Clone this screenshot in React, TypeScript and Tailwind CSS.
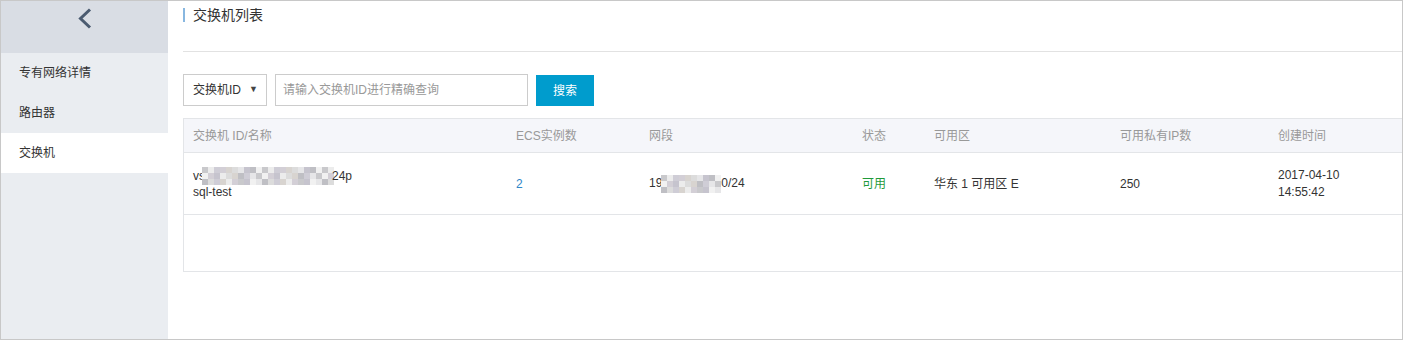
import React from "react";

const font = { fontFamily: '"Liberation Sans", "Noto Sans CJK SC", sans-serif' };

const palette = ["#c9c9cc", "#d3cfd6", "#e6e6e8", "#f1f1f1", "#cfcdd6", "#dcdcdc", "#bfbfc4", "#ececec", "#d8d4d0", "#c6c4ce"];

function Blur({ cols, rows, cell }: { cols: number; rows: number; cell: number }) {
  const cells: React.ReactNode[] = [];
  for (let r = 0; r < rows; r++) {
    for (let c = 0; c < cols; c++) {
      const idx = (c * 7 + r * 3 + ((c * r) % 5)) % palette.length;
      cells.push(
        <div key={`${r}-${c}`} style={{ width: cell, height: cell, background: palette[idx] }} />
      );
    }
  }
  return (
    <span
      className="inline-grid align-middle"
      style={{ gridTemplateColumns: `repeat(${cols}, ${cell}px)` }}
    >
      {cells}
    </span>
  );
}

export default function App() {
  return (
    <div className="w-[1403px] h-[340px] border border-[#c8c8c8] flex bg-white text-[#333] overflow-hidden" style={font}>
      {/* Sidebar */}
      <div className="w-[167px] flex flex-col bg-[#eaedf1]">
        <div className="h-[52px] bg-[#d9dde4] flex justify-center pt-[7px]">
          <svg width="16" height="22" viewBox="0 0 16 22">
            <path d="M13 1.5 L3.5 10.5 L13 19.5" fill="none" stroke="#4b5b70" strokeWidth="3" />
          </svg>
        </div>
        <div className="h-[40px] flex items-center pl-[18px] text-[12px]">专有网络详情</div>
        <div className="h-[40px] flex items-center pl-[18px] text-[12px]">路由器</div>
        <div className="h-[40px] flex items-center pl-[18px] text-[12px] bg-white">交换机</div>
      </div>

      {/* Main */}
      <div className="flex-1 pl-[15px] flex flex-col">
        <div className="h-[51px] border-b border-[#e2e2e2] flex items-start pt-[7px]">
          <div className="w-[2px] h-[14px] bg-[#88b7e0] mr-[8px]" />
          <div className="text-[14px] leading-[14px] text-[#333]">交换机列表</div>
        </div>

        <div className="flex items-start mt-[22px]">
          <div className="w-[84px] h-[32px] border border-[#cccccc] flex items-center pl-[9px] pr-[8px] text-[12px] justify-between">
            <span>交换机ID</span>
            <span className="text-[9px] text-[#444]">▼</span>
          </div>
          <div className="w-[253px] h-[32px] border border-[#cccccc] ml-[8px] flex items-center pl-[7px] text-[12px] text-[#999]">
            请输入交换机ID进行精确查询
          </div>
          <div className="w-[58px] h-[31px] mt-px ml-[8px] bg-[#009ccd] text-white text-[12px] flex items-center justify-center">
            搜索
          </div>
        </div>

        {/* Table */}
        <div className="mt-[12px] border-l border-t border-[#e3e5e8]">
          <div className="grid grid-cols-[322px_133px_213px_72px_186px_158px_1fr] h-[34px] bg-[#f5f6fa] border-b border-[#e3e5e8] text-[12px] text-[#999] items-center">
            <div className="pl-[9px]">交换机 ID/名称</div>
            <div className="pl-[10px]">ECS实例数</div>
            <div className="pl-[10px]">网段</div>
            <div className="pl-[10px]">状态</div>
            <div className="pl-[10px]">可用区</div>
            <div className="pl-[10px]">可用私有IP数</div>
            <div className="pl-[10px]">创建时间</div>
          </div>
          <div className="grid grid-cols-[322px_133px_213px_72px_186px_158px_1fr] h-[62px] border-b border-[#e3e5e8] text-[12px] items-center">
            <div className="pl-[9px] leading-[16px]">
              <div className="flex items-center h-[16px]">
                <span>vs</span>
                <span className="ml-[-3px]"><Blur cols={22} rows={3} cell={6} /></span>
                <span className="ml-[-2px]">24p</span>
              </div>
              <div>sql-test</div>
            </div>
            <div className="pl-[10px] text-[#2f86c8]">2</div>
            <div className="pl-[10px] flex items-center">
              <span>19</span>
              <span className="ml-[-1px]"><Blur cols={10} rows={3} cell={6} /></span>
              <span>0/24</span>
            </div>
            <div className="pl-[10px] text-[#1f9a3a]">可用</div>
            <div className="pl-[10px]">华东 1 可用区 E</div>
            <div className="pl-[10px]">250</div>
            <div className="pl-[10px] leading-[17px]">
              <div>2017-04-10</div>
              <div>14:55:42</div>
            </div>
          </div>
          <div className="h-[57px] border-b border-[#e3e5e8]" />
        </div>
      </div>
    </div>
  );
}
